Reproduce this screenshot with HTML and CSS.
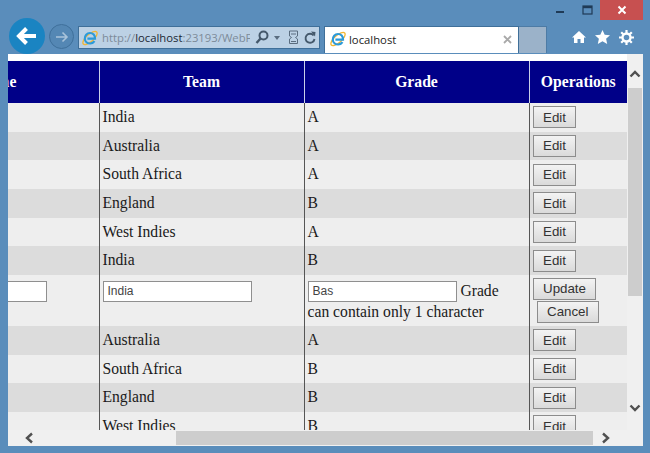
FILE: index.html
```html
<!DOCTYPE html>
<html lang="en">
<head>
<meta charset="utf-8">
<title>localhost</title>
<link rel="stylesheet" href="styles.css">
</head>
<body>
<svg class="defs" width="0" height="0" aria-hidden="true">
  <defs>
    <symbol id="ie" viewBox="0 0 16 16">
      <ellipse cx="8" cy="8" rx="9" ry="3.600" transform="rotate(-42 8 8)" fill="none" stroke="#f2b632" stroke-width="1.300"/>
      <path d="M2.800 9c-.2-3.500 2.200-6 5.200-6 3 0 5 2.300 5 5.600H5.400M12.500 11.200c-1 1.500-2.600 2.300-4.300 2.300-2.900 0-5.200-1.900-5.400-4.500" fill="none" stroke="#2c9ad9" stroke-width="2.200"/>
    </symbol>
  </defs>
</svg>
<div class="window">
  <header class="chrome">
    <div class="caption">
      <span class="win-btn"><svg width="10" height="10" viewBox="0 0 10 10"><rect x="0" y="6" width="8" height="2" fill="#1f3a56"/></svg></span>
      <span class="win-btn"><svg width="11" height="10" viewBox="0 0 11 10"><rect x="1" y="1" width="9" height="8" fill="none" stroke="#1f3a56" stroke-width="1.200"/><rect x="1" y="1" width="9" height="2.200" fill="#1f3a56"/></svg></span>
      <span class="win-close"><svg width="10" height="10" viewBox="0 0 10 10"><path d="M1.500 1.500l7 7m0-7l-7 7" stroke="#fff" stroke-width="2"/></svg></span>
    </div>
    <nav class="nav">
      <span class="back"><svg width="24" height="22" viewBox="0 0 24 22"><path d="M21 11H5M11.500 3.500L4 11l7.500 7.500" fill="none" stroke="#fff" stroke-width="4"/></svg></span>
      <span class="forward"><svg width="14" height="12" viewBox="0 0 14 12"><path d="M1 6h11M7.500 1.500L12 6l-4.500 4.500" fill="none" stroke="#a9c3da" stroke-width="1.600"/></svg></span>
      <div class="address">
        <svg class="ie-icon" width="16" height="16"><use href="#ie"/></svg>
        <span class="url">http://<b>localhost</b>:23193/WebF</span>
        <svg class="addr-icon" width="14" height="15" viewBox="0 0 14 15"><circle cx="8.500" cy="5.500" r="4" fill="none" stroke="#44586b" stroke-width="2"/><path d="M5.500 8.500L1.500 13" stroke="#44586b" stroke-width="2.400"/></svg>
        <svg class="addr-caret" width="6" height="4" viewBox="0 0 6 4"><path d="M0 0h6L3 4z" fill="#5a6d80"/></svg>
        <svg class="addr-page" width="11" height="15" viewBox="0 0 11 15"><path d="M1.500 1h8v5l-2 1.500 2 1.500v4.500h-8V9l2-1.500-2-1.500z" fill="none" stroke="#5a6d80"/><path d="M3 11.500h5M3 4h5" stroke="#5a6d80"/></svg>
        <svg class="addr-icon" width="12" height="14" viewBox="0 0 12 14"><path d="M9.600 4.500A4.500 4.500 0 1 0 10.500 8" fill="none" stroke="#44586b" stroke-width="1.900"/><path d="M7 .5l4.500.5-.5 4.500z" fill="#44586b"/></svg>
      </div>
      <div class="tab">
        <svg class="ie-icon" width="16" height="16"><use href="#ie"/></svg>
        <span class="tab-title">localhost</span>
        <svg width="9" height="9" viewBox="0 0 9 9"><path d="M1 1l7 7m0-7L1 8" stroke="#a9a9a9" stroke-width="1.800"/></svg>
      </div>
      <div class="new-tab"></div>
      <div class="tools">
        <svg width="14" height="14" viewBox="0 0 14 14"><path d="M7 1L0 7.500h2V13h3.500V9h3v4H12V7.500h2z" fill="#fff"/></svg>
        <svg width="15" height="14" viewBox="0 0 15 14"><path d="M7.500 0l2.200 4.700 5.300.6-3.900 3.500 1.100 5.200-4.700-2.700L2.800 14l1.100-5.200L0 5.300l5.300-.6z" fill="#fff"/></svg>
        <svg width="15" height="15" viewBox="0 0 15 15"><circle cx="7.500" cy="7.500" r="4" fill="none" stroke="#fff" stroke-width="2.400"/><path d="M7.500 0v3M7.500 12v3M0 7.500h3M12 7.500h3M2.200 2.200l2.100 2.100M10.700 10.700l2.100 2.100M12.800 2.200l-2.100 2.100M4.300 10.700l-2.100 2.100" stroke="#fff" stroke-width="2.200"/></svg>
      </div>
    </nav>
  </header>
  <main class="viewport">
    <div class="content">
      <table class="grid">
        <colgroup><col class="c-name"><col class="c-team"><col class="c-grade"><col class="c-ops"></colgroup>
        <thead><tr><th>Name</th><th>Team</th><th>Grade</th><th>Operations</th></tr></thead>
        <tbody>
          <tr><td></td><td>India</td><td>A</td><td><button class="btn">Edit</button></td></tr>
          <tr><td></td><td>Australia</td><td>A</td><td><button class="btn">Edit</button></td></tr>
          <tr><td></td><td>South Africa</td><td>A</td><td><button class="btn">Edit</button></td></tr>
          <tr><td></td><td>England</td><td>B</td><td><button class="btn">Edit</button></td></tr>
          <tr><td></td><td>West Indies</td><td>A</td><td><button class="btn">Edit</button></td></tr>
          <tr><td></td><td>India</td><td>B</td><td><button class="btn">Edit</button></td></tr>
          <tr class="editing">
            <td><input class="field" type="text" value=""></td>
            <td><input class="field" type="text" value="India"></td>
            <td><input class="field" type="text" value="Bas"> Grade<br>can contain only 1 character</td>
            <td><button class="btn">Update</button><button class="btn btn-cancel">Cancel</button></td>
          </tr>
          <tr><td></td><td>Australia</td><td>A</td><td><button class="btn">Edit</button></td></tr>
          <tr><td></td><td>South Africa</td><td>B</td><td><button class="btn">Edit</button></td></tr>
          <tr><td></td><td>England</td><td>B</td><td><button class="btn">Edit</button></td></tr>
          <tr><td></td><td>West Indies</td><td>B</td><td><button class="btn">Edit</button></td></tr>
        </tbody>
      </table>
    </div>
    <div class="vscroll">
      <svg width="12" height="8" viewBox="0 0 12 8"><path d="M1.500 6.500L6 2l4.500 4.500" fill="none" stroke="#505050" stroke-width="2.400"/></svg>
      <div class="vtrack"><div class="vthumb"></div></div>
      <svg width="12" height="8" viewBox="0 0 12 8"><path d="M1.500 1.500L6 6l4.500-4.500" fill="none" stroke="#505050" stroke-width="2.400"/></svg>
    </div>
    <div class="hscroll">
      <svg width="10" height="12" viewBox="0 0 10 12"><path d="M8 1.500L3 6l5 4.500" fill="none" stroke="#505050" stroke-width="2.400"/></svg>
      <div class="htrack"><div class="hthumb"></div></div>
      <svg width="10" height="12" viewBox="0 0 10 12"><path d="M2 1.500L7 6l-5 4.500" fill="none" stroke="#505050" stroke-width="2.400"/></svg>
    </div>
    <div class="corner"></div>
  </main>
</div>
</body>
</html>
```
FILE: styles.css
```css
* { box-sizing: border-box; }
html, body { margin: 0; padding: 0; height: 100%; }
body { overflow: hidden; background: #5a8dbb; }
.defs { position: absolute; }

.window {
  width: 650px;
  height: 453px;
  display: flex;
  flex-direction: column;
  padding: 0 7px 8px 8px;
  background: #5a8dbb;
}

.chrome { flex: 0 0 53px; display: flex; flex-direction: column; }

.caption { flex: 0 0 20px; display: flex; justify-content: flex-end; align-items: center; }
.win-btn { width: 26px; height: 20px; display: flex; align-items: center; justify-content: center; }
.win-close {
  width: 43px;
  height: 20px;
  background: #c75050;
  display: flex;
  align-items: center;
  justify-content: center;
}

.nav { flex: 1; display: flex; align-items: flex-start; padding-top: 6px; position: relative; }

.back {
  flex: 0 0 36px;
  height: 36px;
  margin: -8px 0 0 1px;
  border-radius: 50%;
  background: #1a84c2;
  display: flex;
  align-items: center;
  justify-content: center;
}
.forward {
  flex: 0 0 25px;
  height: 25px;
  margin: -2px 4px 0 4px;
  border-radius: 50%;
  background: #5487b4;
  border: 1px solid #3f709b;
  display: flex;
  align-items: center;
  justify-content: center;
}

.address {
  flex: 0 0 242px;
  height: 23px;
  display: flex;
  align-items: center;
  gap: 5px;
  padding: 0 3px;
  background: #bcd1e5;
  border: 1px solid #3f6f99;
  font: 11.3px "Open Sans", "Noto Sans", sans-serif;
  color: #7d8b99;
}
.ie-icon { flex: none; overflow: visible; }
.url { flex: 0 0 148px; width: 148px; margin-left: -1px; overflow: hidden; white-space: nowrap; }
.url b { font-weight: 400; color: #1b2733; }
.addr-icon { flex: none; }
.addr-caret { flex: none; }
.addr-page { flex: none; margin-left: 3px; }

.tab {
  flex: 0 0 195px;
  height: 27px;
  margin-left: 4px;
  display: flex;
  align-items: center;
  padding: 0 6px 2px 5px;
  background: #fff;
  border: 1px solid #3f6f99;
  border-bottom: 0;
  font: 11.3px "Open Sans", "Noto Sans", sans-serif;
  color: #222;
}
.tab-title { flex: 1; padding-left: 3px; }

.new-tab {
  flex: 0 0 28px;
  height: 27px;
  background: #9bb2c9;
  border: 1px solid #4d7ba5;
  border-left: 0;
  border-bottom: 0;
}

.tools {
  flex: 1;
  height: 22px;
  display: flex;
  align-items: center;
  gap: 9px;
  padding-left: 25px;
}

.viewport {
  flex: 1;
  min-height: 0;
  position: relative;
  display: grid;
  grid-template-columns: 619px 16px;
  grid-template-rows: 376px 16px;
  background: #fff;
}

.content { overflow: hidden; padding-top: 7px; }

.grid {
  margin-left: -113px;
  width: 732px;
  table-layout: fixed;
  border-collapse: collapse;
  font: 15.65px "Liberation Serif", "Times New Roman", serif;
  color: #1a1a1a;
}
.c-name { width: 204px; }
.c-team { width: 205px; }
.c-grade { width: 225px; }
.c-ops { width: 98px; }

.grid th {
  height: 42px;
  padding: 0 0 1px;
  background: #000088;
  color: #fff;
  font-weight: 700;
  font-size: 15.7px;
  text-align: center;
  border-left: 1px solid #c8cfe8;
}
.grid th:first-child, .grid td:first-child { border-left: 0; }

.grid td {
  height: 28.67px;
  padding: 0.8px 3px 1.2px;
  vertical-align: middle;
  border-left: 1px solid #555;
}
.grid td:last-child { padding: 1px 3px; }
.grid tbody tr:nth-child(odd) { background: #eeeeee; }
.grid tbody tr:nth-child(even) { background: #dcdcdc; }

.grid .editing td { height: 51px; vertical-align: top; padding: 6px 3px 0; line-height: 20px; }
.grid .editing td:last-child { padding: 3px 3px 0; line-height: 0; }

.field {
  width: 149px;
  height: 21px;
  padding: 0 4px;
  border: 1px solid #8f8f8f;
  background: #fff;
  font: 12px "Liberation Sans", Arial, sans-serif;
  color: #444;
  vertical-align: top;
}

.btn {
  height: 22px;
  padding: 0 9.5px;
  border: 1px solid #8c8c8c;
  background: linear-gradient(#f3f3f3, #dadada);
  font: 13.33px "Liberation Sans", Arial, sans-serif;
  color: #333;
  vertical-align: middle;
}
.grid td .btn-cancel { display: block; margin: 1px 0 0 4px; }

.vscroll {
  grid-column: 2;
  grid-row: 1;
  display: flex;
  flex-direction: column;
  align-items: center;
  background: #f0f0f0;
}
.vscroll svg { flex: none; margin: 16px 0 10px; }
.vscroll svg:last-child { margin: 0 0 18px; }
.vtrack { flex: 1; width: 100%; padding: 0 1px; }
.vthumb { height: 208px; background: #cdcdcd; }

.hscroll {
  grid-column: 1;
  grid-row: 2;
  display: flex;
  align-items: center;
  background: #f0f0f0;
  padding-left: 16px;
}
.hscroll svg { flex: none; }
.htrack { flex: 1; height: 100%; padding: 1px 0 1px 142px; }
.hthumb { width: 417px; height: 100%; background: #cdcdcd; }
.hscroll svg:last-child { margin-right: 16px; }

.corner { grid-column: 2; grid-row: 2; background: #f0f0f0; }
```
